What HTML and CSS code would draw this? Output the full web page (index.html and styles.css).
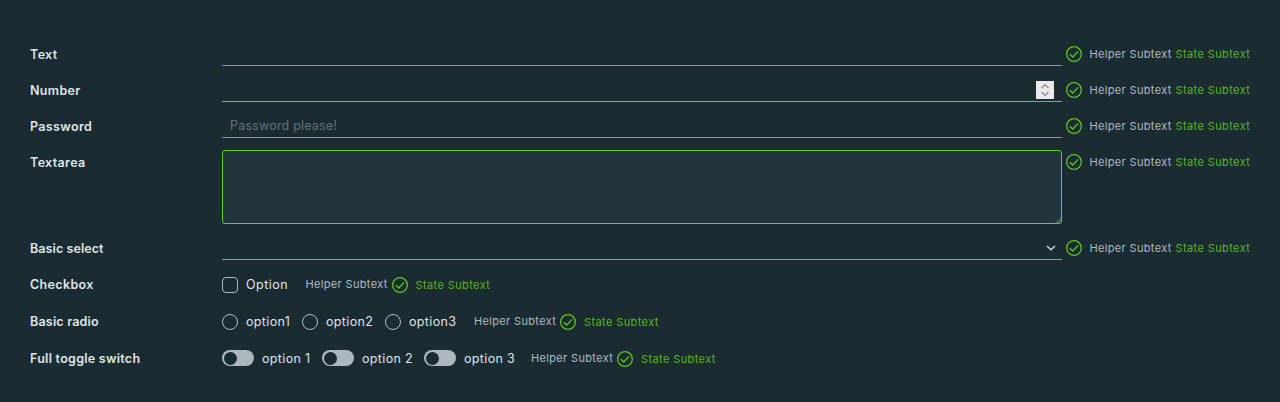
FILE: index.html
```html
<!DOCTYPE html>
<html lang="en">
<head>
<meta charset="utf-8">
<title>Form controls</title>
<link rel="stylesheet" href="styles.css">
</head>
<body>
<svg class="defs" width="0" height="0">
  <symbol id="ok" viewBox="0 0 16 16"><circle cx="8" cy="8" r="7.35"/><path d="M3.8 8.3 6.8 11l5.3-5.6"/></symbol>
</svg>
<form class="form">
  <div class="row">
    <label class="label">Text</label>
    <div class="field"></div>
    <div class="notes"><svg class="icon"><use href="#ok"/></svg><span class="helper">Helper Subtext</span><span class="state">State Subtext</span></div>
  </div>
  <div class="row">
    <label class="label">Number</label>
    <div class="field number"><span class="spinner"><svg width="18" height="18" viewBox="0 0 18 18"><path d="M5.5 7 9 3.8 12.5 7M5.5 11 9 14.2 12.5 11"/></svg></span></div>
    <div class="notes"><svg class="icon"><use href="#ok"/></svg><span class="helper">Helper Subtext</span><span class="state">State Subtext</span></div>
  </div>
  <div class="row">
    <label class="label">Password</label>
    <div class="field"><span class="placeholder">Password please!</span></div>
    <div class="notes"><svg class="icon"><use href="#ok"/></svg><span class="helper">Helper Subtext</span><span class="state">State Subtext</span></div>
  </div>
  <div class="row">
    <label class="label">Textarea</label>
    <div class="area"><svg width="6" height="6" viewBox="0 0 6 6"><path d="M0 6 6 0V6Z"/></svg></div>
    <div class="notes"><svg class="icon"><use href="#ok"/></svg><span class="helper">Helper Subtext</span><span class="state">State Subtext</span></div>
  </div>
  <div class="row">
    <label class="label select-label">Basic select</label>
    <div class="field select"><svg width="10" height="6" viewBox="0 0 10 6"><path d="M1 1 5 4.8 9 1"/></svg></div>
    <div class="notes"><svg class="icon"><use href="#ok"/></svg><span class="helper">Helper Subtext</span><span class="state">State Subtext</span></div>
  </div>
  <div class="row choices">
    <label class="label">Checkbox</label>
    <span class="box"></span><span class="option w-check">Option</span>
    <span class="helper">Helper Subtext</span><svg class="icon"><use href="#ok"/></svg><span class="state">State Subtext</span>
  </div>
  <div class="row choices">
    <label class="label radio-label">Basic radio</label>
    <span class="box round"></span><span class="option w-radio-1">option1</span>
    <span class="box round"></span><span class="option w-radio">option2</span>
    <span class="box round"></span><span class="option w-radio-last">option3</span>
    <span class="helper">Helper Subtext</span><svg class="icon"><use href="#ok"/></svg><span class="state">State Subtext</span>
  </div>
  <div class="row choices">
    <label class="label toggle-label">Full toggle switch</label>
    <span class="toggle"></span><span class="option w-toggle-1">option 1</span>
    <span class="toggle"></span><span class="option w-toggle-2">option 2</span>
    <span class="toggle"></span><span class="option w-toggle-last">option 3</span>
    <span class="helper">Helper Subtext</span><svg class="icon"><use href="#ok"/></svg><span class="state">State Subtext</span>
  </div>
</form>
</body>
</html>
```
FILE: styles.css
```css
* { box-sizing: border-box; }
body {
  margin: 0;
  height: 402px;
  overflow: hidden;
  background: #1b2b32;
  color: #dee6ea;
  font: 13px/24px "Inter", sans-serif;
  white-space: nowrap;
}
.defs { display: none; }
.form { padding: 42px 0 0 30px; }
.row { display: grid; grid-template-columns: 192px 840px auto; margin-bottom: 12px; align-items: start; }
.label { height: 24px; line-height: 26px; font-weight: 600; font-size: 12.5px; letter-spacing: 0.35px; }
.select-label { letter-spacing: 0.08px; }
.radio-label { letter-spacing: 0.2px; }
.toggle-label { letter-spacing: 0.27px; }
.field { display: flex; height: 24px; border-bottom: 1px solid #60cc1c; }
.number { justify-content: flex-end; padding: 3px 8px 0 0; }
.spinner { width: 18px; height: 18px; background: #e9e9ed; }
.spinner svg { display: block; fill: none; stroke: #8f8f9d; stroke-width: 1.5; }
.placeholder { padding-left: 8px; color: #64727a; font-size: 12.5px; letter-spacing: 0.2px; }
.area {
  display: flex; align-items: flex-end; justify-content: flex-end;
  height: 74px; border: 1px solid #60cc1c; border-radius: 3px; background: #22343c; overflow: hidden;
}
.area svg { fill: #4e5f52; }
.select { justify-content: flex-end; padding: 9px 6px 0 0; }
.select svg { fill: none; stroke: #d3dbe0; stroke-width: 1.3; }
.notes { display: flex; padding-left: 4px; }
.icon { width: 16px; height: 16px; margin-top: 4px; flex: none; fill: none; stroke: #5ec41b; stroke-width: 1.3; }
.helper { width: 86px; margin-left: 7.5px; font-size: 11px; letter-spacing: 0.34px; color: #adbbc4; }
.state { width: 75px; font-size: 11px; letter-spacing: 0.39px; color: #5ab41b; }
.choices { display: flex; height: 25px; }
.choices .label { width: 192px; }
.box { width: 16px; height: 16px; margin: 5px 8px 0 0; border: 1px solid #adbbc4; border-radius: 4px; }
.round { border-radius: 50%; }
.option { flex: none; line-height: 25px; font-size: 12.5px; letter-spacing: 0.34px; }
.choices .icon { margin: 5px 8px 0 0; }
.choices .helper { width: 86px; margin-left: 0; }
.choices .state { line-height: 26px; }
.w-check { width: 59.5px; letter-spacing: 0.5px; }
.w-radio-1 { width: 56px; }
.w-radio { width: 59px; }
.w-radio-last { width: 65px; }
.toggle { width: 32px; height: 16px; margin: 4px 8px 0 0; border-radius: 8px; background: #adb7be; padding: 1.5px; }
.toggle::before { content: ""; display: block; width: 13px; height: 13px; border-radius: 50%; background: #1b2b32; }
.w-toggle-1 { width: 60px; }
.w-toggle-2 { width: 62px; }
.w-toggle-last { width: 67px; }
```
